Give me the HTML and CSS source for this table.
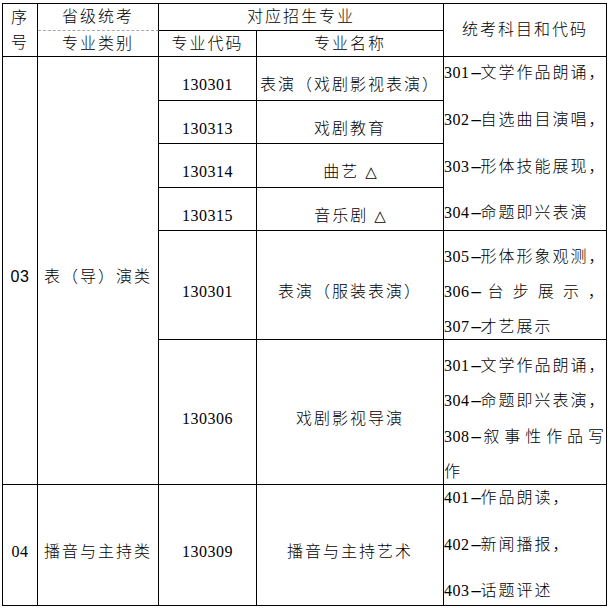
FILE: index.html
```html
<!DOCTYPE html>
<html lang="zh-CN">
<head>
<meta charset="utf-8">
<title>统考科目表</title>
<link rel="stylesheet" href="styles.css">
</head>
<body>
<div class="sheet">
  <div class="cell hd seq span-r2"><span>序</span><span>号</span></div>
  <div class="cell hd cat-top">省级统考</div>
  <div class="cell hd span-c2">对应招生专业</div>
  <div class="cell hd span-r2">统考科目和代码</div>
  <div class="cell hd">专业类别</div>
  <div class="cell hd">专业代码</div>
  <div class="cell hd">专业名称</div>

  <div class="cell body span-r6 sans">03</div>
  <div class="cell body span-r6">表（导）演类</div>
  <div class="cell body num">130301</div>
  <div class="cell body">表演（戏剧影视表演）</div>
  <div class="cell list l47 span-r4">
    <div class="ln"><span class="num">301<span class="dash">-</span></span>文学作品朗诵，</div>
    <div class="ln"><span class="num">302<span class="dash">-</span></span>自选曲目演唱，</div>
    <div class="ln"><span class="num">303<span class="dash">-</span></span>形体技能展现，</div>
    <div class="ln"><span class="num">304<span class="dash">-</span></span>命题即兴表演</div>
  </div>

  <div class="cell body num">130313</div>
  <div class="cell body">戏剧教育</div>

  <div class="cell body num">130314</div>
  <div class="cell body"><span>曲艺 <span class="tri">△</span></span></div>

  <div class="cell body num">130315</div>
  <div class="cell body"><span>音乐剧 <span class="tri">△</span></span></div>

  <div class="cell body num">130301</div>
  <div class="cell body">表演（服装表演）</div>
  <div class="cell list body l35">
    <div class="ln"><span class="num">305<span class="dash">-</span></span>形体形象观测，</div>
    <div class="ln just"><span class="num">306<span class="dash">-</span></span>台步展示，</div>
    <div class="ln"><span class="num">307<span class="dash">-</span></span>才艺展示</div>
  </div>

  <div class="cell body num">130306</div>
  <div class="cell body">戏剧影视导演</div>
  <div class="cell list body l355">
    <div class="ln"><span class="num">301<span class="dash">-</span></span>文学作品朗诵，</div>
    <div class="ln"><span class="num">304<span class="dash">-</span></span>命题即兴表演，</div>
    <div class="ln just"><span class="num">308<span class="dash">-</span></span>叙事性作品写</div>
    <div class="ln">作</div>
  </div>

  <div class="cell body num">04</div>
  <div class="cell body">播音与主持类</div>
  <div class="cell body num">130309</div>
  <div class="cell body">播音与主持艺术</div>
  <div class="cell list l47">
    <div class="ln"><span class="num">401<span class="dash">-</span></span>作品朗读，</div>
    <div class="ln"><span class="num">402<span class="dash">-</span></span>新闻播报，</div>
    <div class="ln"><span class="num">403<span class="dash">-</span></span>话题评述</div>
  </div>
</div>
</body>
</html>
```
FILE: styles.css
```css
html, body {
  margin: 0;
  padding: 0;
  background: #ffffff;
}

.sheet {
  display: grid;
  grid-template-columns: 35px 121px 98px 187px 163px;
  grid-template-rows: 27px 26px 44px 43px 44px 43px 109px 145px 121px;
  width: max-content;
  margin: 3px 0 0 2px;
  border-top: 1px solid #000;
  border-left: 1px solid #000;
  font-family: "Liberation Serif", "Noto Sans CJK SC", serif;
  font-size: 16px;
  font-weight: 300;
  color: #000;
  letter-spacing: 2px;
}

.cell {
  box-sizing: border-box;
  border-right: 1px solid #000;
  border-bottom: 1px solid #000;
  display: flex;
  flex-direction: column;
  align-items: center;
  justify-content: center;
  line-height: 20px;
  white-space: nowrap;
  overflow: visible;
}

.span-r2 { grid-row: span 2; }
.span-r4 { grid-row: span 4; }
.span-r6 { grid-row: span 6; }
.span-c2 { grid-column: span 2; }

.seq { line-height: 25px; }

.cat-top { border-bottom: 1px dashed #a8a8a8; }

.body { padding-top: 13px; }

.num { letter-spacing: 0.5px; }

.sans {
  font-family: "Liberation Sans", "Noto Sans CJK SC", sans-serif;
  letter-spacing: 0.5px;
}

.dash {
  display: inline-block;
  width: 11px;
  letter-spacing: 0;
  transform: scaleX(2.3);
  transform-origin: 0 50%;
}

.tri {
  font-family: "DejaVu Sans", sans-serif;
  font-size: 15px;
  font-weight: 700;
  letter-spacing: 0;
}

.list { align-items: flex-start; }
.list .ln { align-self: stretch; }
.l47 { line-height: 46.7px; }
.l35 { line-height: 35px; }
.l355 { line-height: 35.5px; }

.just {
  text-align: justify;
  text-align-last: justify;
}
```
